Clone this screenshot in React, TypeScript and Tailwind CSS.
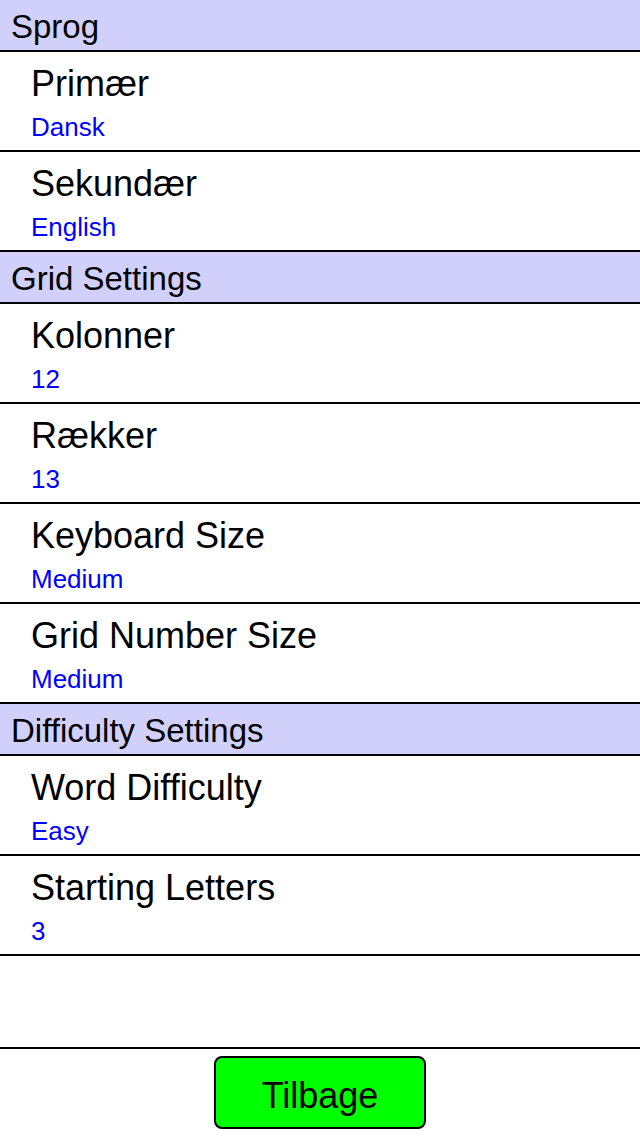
import React from "react";

type Item = { title: string; value: string };
type Section = { header: string; items: Item[] };

const sections: Section[] = [
  {
    header: "Sprog",
    items: [
      { title: "Primær", value: "Dansk" },
      { title: "Sekundær", value: "English" },
    ],
  },
  {
    header: "Grid Settings",
    items: [
      { title: "Kolonner", value: "12" },
      { title: "Rækker", value: "13" },
      { title: "Keyboard Size", value: "Medium" },
      { title: "Grid Number Size", value: "Medium" },
    ],
  },
  {
    header: "Difficulty Settings",
    items: [
      { title: "Word Difficulty", value: "Easy" },
      { title: "Starting Letters", value: "3" },
    ],
  },
];

export default function App() {
  return (
    <div
      className="flex h-[1136px] w-[640px] flex-col overflow-hidden bg-white text-black"
      style={{ fontFamily: '"Liberation Sans", Arial, sans-serif' }}
    >
      {sections.map((s) => (
        <div key={s.header}>
          <div className="h-[52px] border-b-2 border-black bg-[#d0d0fb] pl-[11px] pt-[3px] text-[33px] leading-[47px]">
            {s.header}
          </div>
          {s.items.map((it) => (
            <div
              key={it.title}
              className="h-[100px] border-b-2 border-black pl-[31px] pt-[12px]"
            >
              <div className="text-[36px] leading-[40px]">{it.title}</div>
              <div className="mt-[8px] text-[26px] leading-[30px] text-[#0000ff]">
                {it.value}
              </div>
            </div>
          ))}
        </div>
      ))}
      <div className="flex-1 border-b-2 border-black" />
      <div className="flex h-[87px] items-center justify-center">
        <button className="h-[73px] w-[212px] rounded-[8px] border-2 border-black bg-[#00ff00] pt-[6px] text-[36px] leading-[40px] text-black">
          Tilbage
        </button>
      </div>
    </div>
  );
}
